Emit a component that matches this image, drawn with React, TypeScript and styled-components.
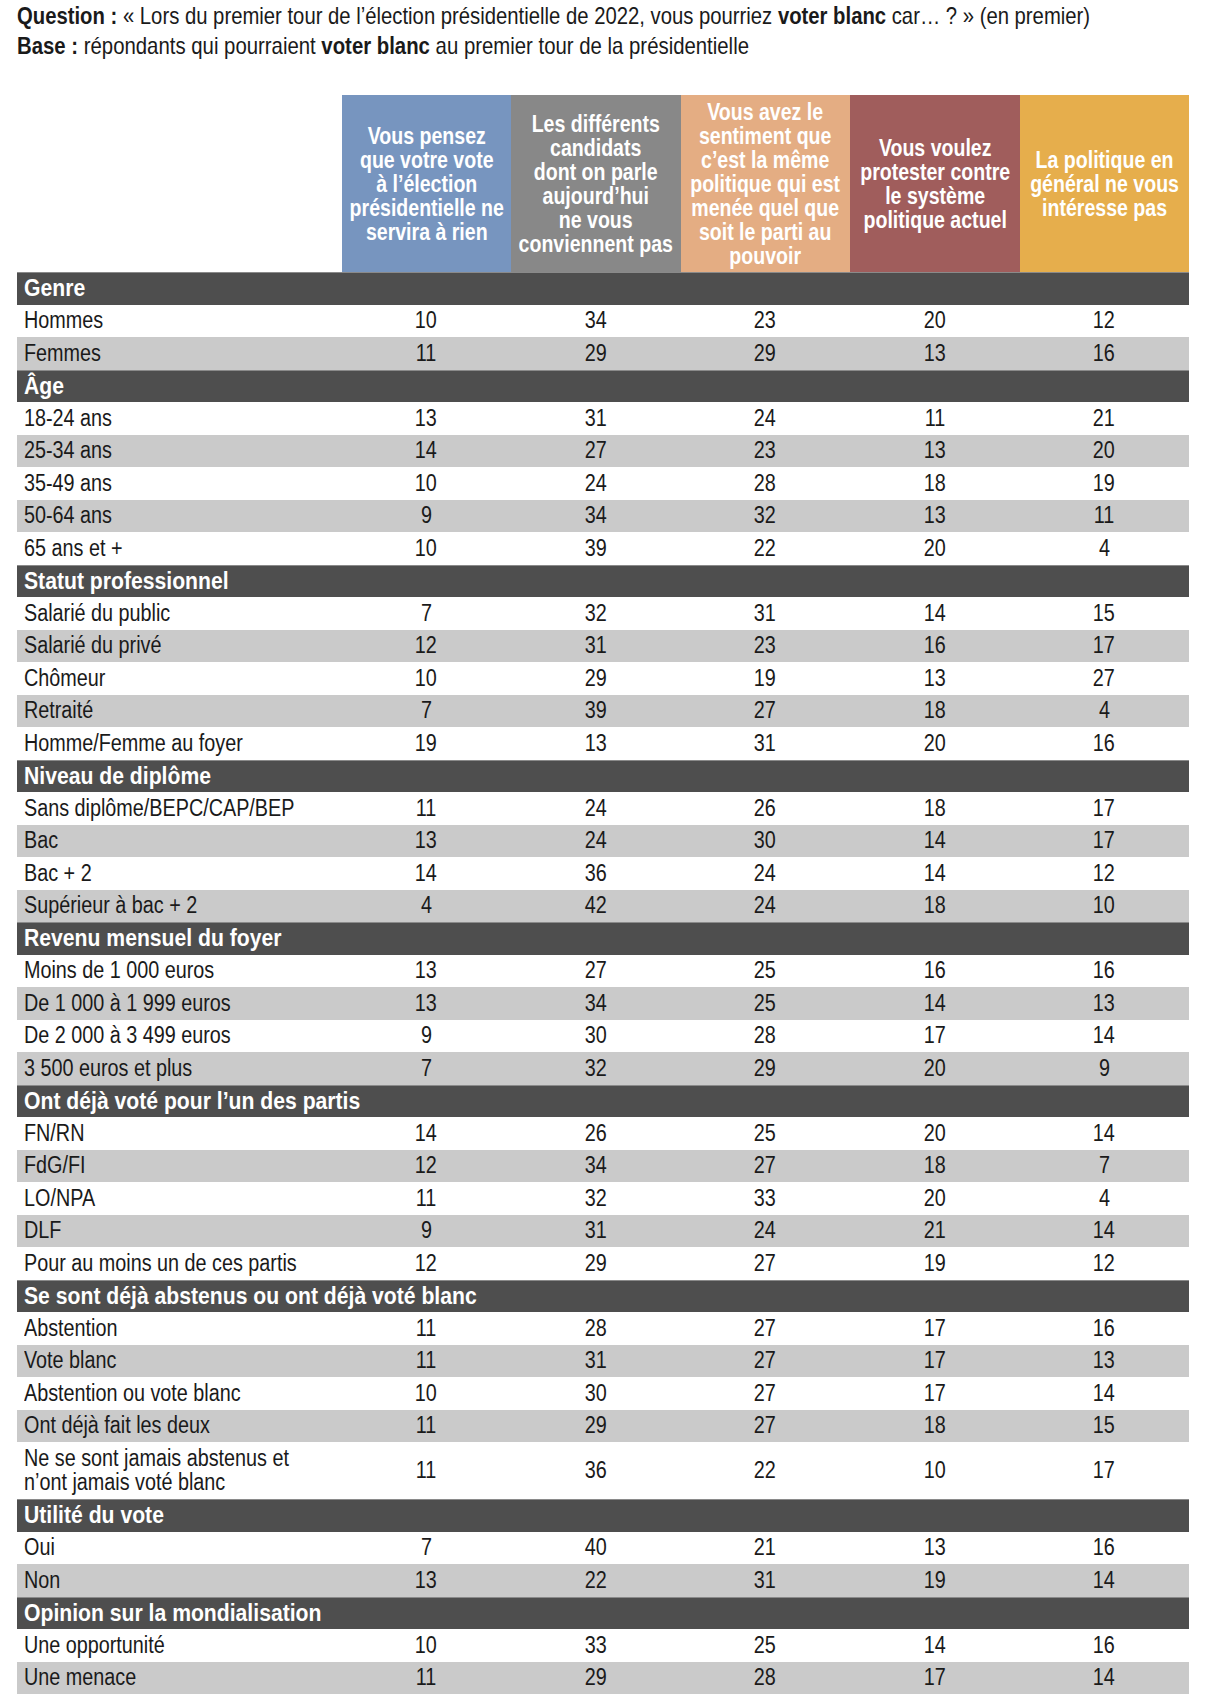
import styled, { createGlobalStyle } from 'styled-components';

// no condensed face is installed, so text is narrowed with scaleX
const GlobalStyle = createGlobalStyle`
    body {
        margin: 0;
        background: #ffffff;
        font-family: "Liberation Sans", Arial, sans-serif;
        color: #1a1a1a;
    }
`

const Page = styled.div`
    width: 1210px;
    padding: 1px 0 0 17px;
    box-sizing: border-box;
    overflow: hidden;
`

const Squeeze = styled.span<{ $origin?: string; $scale?: number }>`
    display: inline-block;
    white-space: pre;
    transform: scaleX(${(p) => p.$scale ?? 0.86});
    transform-origin: ${(p) => p.$origin ?? 'center'};
`

const Intro = styled.p`
    margin: 0;
    font-size: 24px;
    line-height: 30px;
    white-space: nowrap;
    b {
        font-weight: 700;
    }
`

const Table = styled.div`
    margin-top: 34px;
    width: 1172px;
    display: grid;
    grid-template-columns: 324.5px repeat(5, minmax(0, 1fr));
`

const HeadCell = styled.div<{ $bg: string }>`
    height: 177px;
    min-width: 0;
    background: ${(p) => p.$bg};
    color: #ffffff;
    font-weight: 700;
    font-size: 23px;
    line-height: 24px;
    text-align: center;
    display: flex;
    align-items: center;
    justify-content: center;
`

const Blank = styled.div`
    height: 177px;
`

const SectionBar = styled.div`
    grid-column: 1 / -1;
    height: 32.5px;
    box-sizing: border-box;
    background: #4e4e4e;
    color: #ffffff;
    font-weight: 700;
    font-size: 23px;
    padding-left: 7px;
    display: flex;
    align-items: center;
    border-top: 1px solid #8a8a8a;
`

const Row = styled.div<{ $gray: boolean; $tall: boolean }>`
    grid-column: 1 / -1;
    display: grid;
    grid-template-columns: subgrid;
    height: ${(p) => (p.$tall ? '57px' : '32.5px')};
    background: ${(p) => (p.$gray ? '#cacaca' : '#ffffff')};
    font-size: 23px;
`

const Label = styled.div`
    padding-left: 7px;
    display: flex;
    align-items: center;
    line-height: 23.5px;
`

const Value = styled.div`
    display: flex;
    align-items: center;
    justify-content: center;
`

const heads = [
    { bg: '#7795bf', text: 'Vous pensez\nque votre vote\nà l’élection\nprésidentielle ne\nservira à rien' },
    { bg: '#888888', text: 'Les différents\ncandidats\ndont on parle\naujourd’hui\nne vous\nconviennent pas' },
    { bg: '#e4ad83', text: 'Vous avez le\nsentiment que\nc’est la même\npolitique qui est\nmenée quel que\nsoit le parti au\npouvoir' },
    { bg: '#a05d5c', text: 'Vous voulez\nprotester contre\nle système\npolitique actuel' },
    { bg: '#e6ae4c', text: 'La politique en\ngénéral ne vous\nintéresse pas' },
];

type Line = [string, number, number, number, number, number];

const sections: { title: string; rows: Line[] }[] = [
    { title: 'Genre', rows: [['Hommes', 10, 34, 23, 20, 12], ['Femmes', 11, 29, 29, 13, 16]] },
    {
        title: 'Âge',
        rows: [
            ['18-24 ans', 13, 31, 24, 11, 21],
            ['25-34 ans', 14, 27, 23, 13, 20],
            ['35-49 ans', 10, 24, 28, 18, 19],
            ['50-64 ans', 9, 34, 32, 13, 11],
            ['65 ans et +', 10, 39, 22, 20, 4],
        ],
    },
    {
        title: 'Statut professionnel',
        rows: [
            ['Salarié du public', 7, 32, 31, 14, 15],
            ['Salarié du privé', 12, 31, 23, 16, 17],
            ['Chômeur', 10, 29, 19, 13, 27],
            ['Retraité', 7, 39, 27, 18, 4],
            ['Homme/Femme au foyer', 19, 13, 31, 20, 16],
        ],
    },
    {
        title: 'Niveau de diplôme',
        rows: [
            ['Sans diplôme/BEPC/CAP/BEP', 11, 24, 26, 18, 17],
            ['Bac', 13, 24, 30, 14, 17],
            ['Bac + 2', 14, 36, 24, 14, 12],
            ['Supérieur à bac + 2', 4, 42, 24, 18, 10],
        ],
    },
    {
        title: 'Revenu mensuel du foyer',
        rows: [
            ['Moins de 1 000 euros', 13, 27, 25, 16, 16],
            ['De 1 000 à 1 999 euros', 13, 34, 25, 14, 13],
            ['De 2 000 à 3 499 euros', 9, 30, 28, 17, 14],
            ['3 500 euros et plus', 7, 32, 29, 20, 9],
        ],
    },
    {
        title: 'Ont déjà voté pour l’un des partis',
        rows: [
            ['FN/RN', 14, 26, 25, 20, 14],
            ['FdG/FI', 12, 34, 27, 18, 7],
            ['LO/NPA', 11, 32, 33, 20, 4],
            ['DLF', 9, 31, 24, 21, 14],
            ['Pour au moins un de ces partis', 12, 29, 27, 19, 12],
        ],
    },
    {
        title: 'Se sont déjà abstenus ou ont déjà voté blanc',
        rows: [
            ['Abstention', 11, 28, 27, 17, 16],
            ['Vote blanc', 11, 31, 27, 17, 13],
            ['Abstention ou vote blanc', 10, 30, 27, 17, 14],
            ['Ont déjà fait les deux', 11, 29, 27, 18, 15],
            ['Ne se sont jamais abstenus et\nn’ont jamais voté blanc', 11, 36, 22, 10, 17],
        ],
    },
    { title: 'Utilité du vote', rows: [['Oui', 7, 40, 21, 13, 16], ['Non', 13, 22, 31, 19, 14]] },
    {
        title: 'Opinion sur la mondialisation',
        rows: [['Une opportunité', 10, 33, 25, 14, 16], ['Une menace', 11, 29, 28, 17, 14]],
    },
];

const App = () => {
    return (
        <Page>
            <GlobalStyle />
            <Intro>
                <Squeeze $origin="left" $scale={0.845}>
                    <b>Question :</b> « Lors du premier tour de l’élection présidentielle de 2022, vous pourriez <b>voter blanc</b> car… ? » (en premier)
                </Squeeze>
            </Intro>
            <Intro>
                <Squeeze $origin="left" $scale={0.848}>
                    <b>Base :</b> répondants qui pourraient <b>voter blanc</b> au premier tour de la présidentielle
                </Squeeze>
            </Intro>

            <Table>
                <Blank />
                {heads.map((h) => (
                    <HeadCell key={h.bg} $bg={h.bg}>
                        <Squeeze $scale={0.85}>{h.text}</Squeeze>
                    </HeadCell>
                ))}
                {sections.map((s) => [
                    <SectionBar key={s.title}>
                        <Squeeze $origin="left" $scale={0.92}>{s.title}</Squeeze>
                    </SectionBar>,
                    ...s.rows.map(([label, ...values], i) => (
                        <Row key={s.title + label} $gray={i % 2 === 1} $tall={label.includes('\n')}>
                            <Label>
                                <Squeeze $origin="left">{label}</Squeeze>
                            </Label>
                            {values.map((v, j) => (
                                <Value key={j}>
                                    <Squeeze>{v}</Squeeze>
                                </Value>
                            ))}
                        </Row>
                    )),
                ])}
            </Table>
        </Page>
    )
}

export default App
